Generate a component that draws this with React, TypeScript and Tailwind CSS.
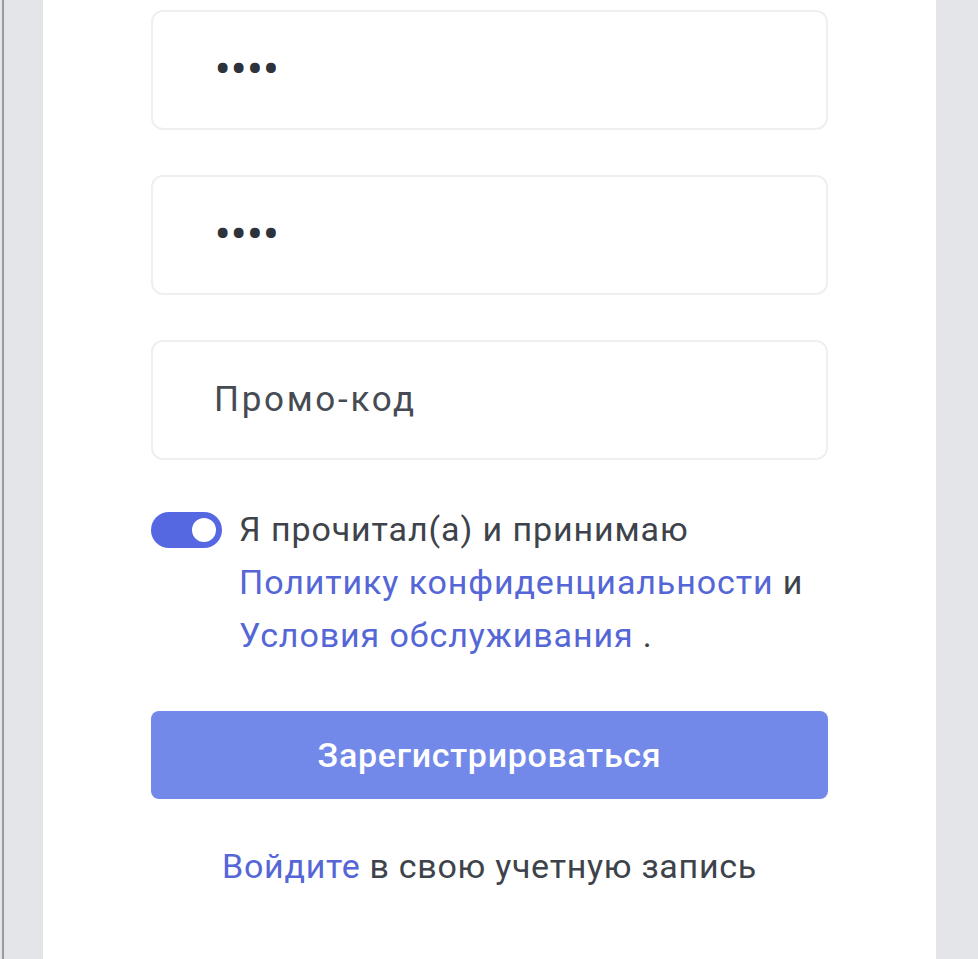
import React from "react";

export default function App() {
  return (
    <div
      className="flex h-[959px] w-[978px] overflow-hidden bg-[#e4e5e8]"
      style={{ fontFamily: "Roboto, 'Noto Sans', sans-serif" }}
    >
      <div className="ml-[2px] w-[2px] bg-[#9a9a9c]" />
      <div className="w-[39px]" />
      <div className="flex w-[893px] flex-col bg-white px-[108px] pt-[10px]">
        <div className="flex flex-col gap-[45px]">
          <div className="flex h-[120px] items-center rounded-[12px] border-2 border-[#efefef] pl-[62px]">
            <span className="text-[42px] font-bold leading-none tracking-[1px] text-[#2e333b]">••••</span>
          </div>
          <div className="flex h-[120px] items-center rounded-[12px] border-2 border-[#efefef] pl-[62px]">
            <span className="text-[42px] font-bold leading-none tracking-[1px] text-[#2e333b]">••••</span>
          </div>
          <div className="flex h-[120px] items-center rounded-[12px] border-2 border-[#efefef] pl-[61px]">
            <span className="text-[35px] tracking-[2.7px] text-[#464b53]">Промо-код</span>
          </div>
        </div>
        <div className="mt-[43px] flex items-start gap-[17px]">
          <div className="mt-[9px] flex h-[36px] w-[71px] shrink-0 items-center justify-end rounded-full bg-[#5568e2] pr-[6px]">
            <div className="h-[24px] w-[24px] rounded-full bg-white" />
          </div>
          <p className="text-[34px] leading-[53px] tracking-[0.9px] text-[#3e434b]">
            Я прочитал(а) и принимаю{" "}
            <span className="text-[#5566d6]">Политику конфиденциальности</span> и{" "}
            <span className="text-[#5566d6]">Условия обслуживания</span> .
          </p>
        </div>
        <button className="mt-[49px] flex h-[88px] w-full items-center justify-center rounded-[8px] bg-[#7389e9] text-[34px] font-medium tracking-[0.7px] text-white">
          Зарегистрироваться
        </button>
        <p className="mt-[47px] text-center text-[34px] leading-[40px] tracking-[0.7px] text-[#3e434b]">
          <span className="text-[#5566d6]">Войдите</span> в свою учетную запись
        </p>
      </div>
    </div>
  );
}
